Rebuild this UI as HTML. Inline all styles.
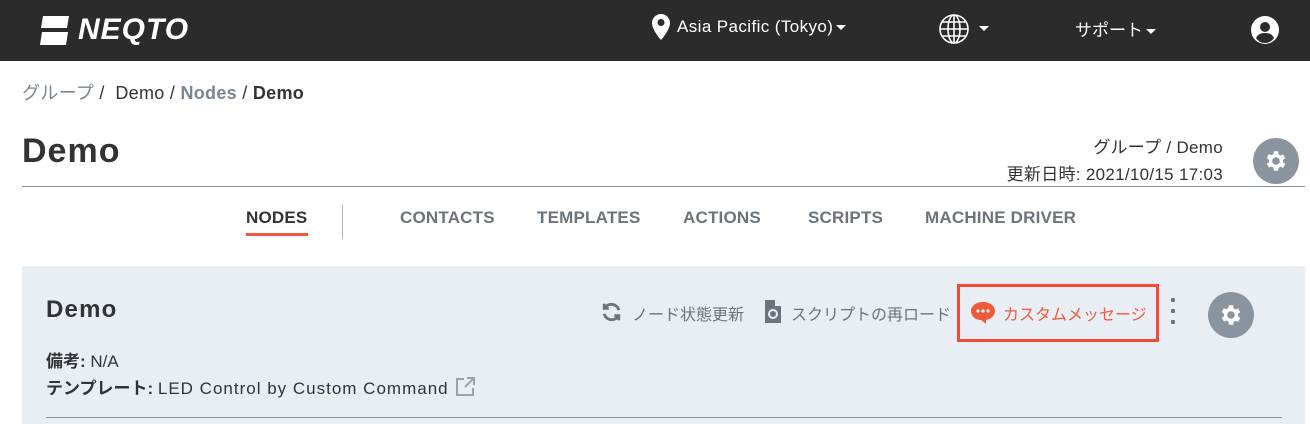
<!DOCTYPE html>
<html><head><meta charset="utf-8"><style>
*{margin:0;padding:0;box-sizing:border-box}
body{width:1310px;height:424px;overflow:hidden;background:#fff;font-family:"Liberation Sans","Noto Sans CJK JP",sans-serif;color:#333;position:relative}
.a{position:absolute;white-space:nowrap}
.hdr{position:absolute;left:0;top:0;width:1310px;height:61px;background:#2b2b2b;color:#fff}
.car{display:inline-block;width:0;height:0;border-left:5px solid transparent;border-right:5px solid transparent;border-top:5px solid #fff;vertical-align:middle;margin-left:3px}
.tab{position:absolute;top:208px;font-size:17px;font-weight:bold;color:#6b737c;letter-spacing:0.2px}
.gear{position:absolute;border-radius:50%;background:#8a949e}
</style></head><body>
<div class="hdr">
  <svg class="a" style="left:40px;top:16px" width="30" height="30" viewBox="0 0 30 30"><polygon points="3,0 29,0 27,12 1,12" fill="#fff"/><polygon points="2,16 28,16 26,29 0,29" fill="#fff"/></svg>
  <div class="a" style="left:78px;top:13px;font-size:30px;font-weight:bold;font-style:italic;letter-spacing:1px">NEQTO</div>
  <svg class="a" style="left:652px;top:14px" width="18" height="26" viewBox="0 0 18 26"><path d="M9 0C4 0 0 4 0 9c0 7 9 17 9 17s9-10 9-17c0-5-4-9-9-9zm0 12a3.5 3.5 0 1 1 0-7 3.5 3.5 0 0 1 0 7z" fill="#fff"/></svg>
  <div class="a" style="left:677px;top:17px;font-size:17px;letter-spacing:0.4px">Asia Pacific (Tokyo)<span class="car"></span></div>
  <svg class="a" style="left:938px;top:13px" width="32" height="32" viewBox="0 0 32 32" fill="none" stroke="#fff" stroke-width="1.6"><circle cx="16" cy="16" r="14"/><ellipse cx="16" cy="16" rx="6" ry="14"/><line x1="2" y1="16" x2="30" y2="16"/><line x1="4" y1="9" x2="28" y2="9"/><line x1="4" y1="23" x2="28" y2="23"/><line x1="16" y1="2" x2="16" y2="30"/></svg>
  <span class="car a" style="left:976px;top:26px"></span>
  <div class="a" style="left:1075px;top:16px;font-size:17px">サポート<span class="car"></span></div>
  <svg class="a" style="left:1251px;top:16px" width="28" height="28" viewBox="0 0 28 28"><circle cx="14" cy="14" r="14" fill="#fff"/><circle cx="14" cy="11" r="5" fill="#2b2b2b"/><path d="M5 22c2-4 5-5 9-5s7 1 9 5c-2 3-5 5-9 5s-7-2-9-5z" fill="#2b2b2b"/></svg>
</div>
<div class="a" style="left:22px;top:79px;font-size:18px;color:#333;letter-spacing:0.3px"><span style="color:#7a8593">グループ</span> /&nbsp; Demo / <b style="color:#7a8593">Nodes</b> / <b>Demo</b></div>
<div class="a" style="left:22px;top:132px;font-size:34px;font-weight:bold;color:#333;letter-spacing:1px">Demo</div>
<div class="a" style="right:87px;top:134px;font-size:17px;text-align:right;line-height:27px;letter-spacing:0.3px">グループ / Demo<br>更新日時: 2021/10/15 17:03</div>
<div class="gear" style="left:1253px;top:138px;width:46px;height:46px"></div>
<svg class="a" style="left:1263px;top:148px" width="26" height="26" viewBox="0 0 24 24"><path fill="#fff" d="M19.4 13a7.5 7.5 0 0 0 0-2l2.1-1.6-2-3.5-2.5 1a7 7 0 0 0-1.7-1L15 3h-4l-.4 2.7a7 7 0 0 0-1.7 1l-2.5-1-2 3.5L6.6 11a7.5 7.5 0 0 0 0 2l-2.1 1.6 2 3.5 2.5-1a7 7 0 0 0 1.7 1L11 21h4l.4-2.7a7 7 0 0 0 1.7-1l2.5 1 2-3.5zM13 15.5a3.5 3.5 0 1 1 0-7 3.5 3.5 0 0 1 0 7z" transform="translate(-1 0)"/></svg>
<div class="a" style="left:22px;top:186px;width:1283px;height:1px;background:#8a949e"></div>
<div class="tab" style="left:246px;color:#333">NODES</div>
<div class="a" style="left:246px;top:233px;width:62px;height:3px;background:#f05a3c"></div>
<div class="a" style="left:342px;top:205px;width:1px;height:34px;background:#aab2bb"></div>
<div class="tab" style="left:400px">CONTACTS</div>
<div class="tab" style="left:537px">TEMPLATES</div>
<div class="tab" style="left:683px">ACTIONS</div>
<div class="tab" style="left:808px">SCRIPTS</div>
<div class="tab" style="left:925px">MACHINE DRIVER</div>
<div class="a" style="left:22px;top:266px;width:1283px;height:158px;background:#e9eef5"></div>
<div class="a" style="left:46px;top:296px;font-size:24px;font-weight:bold;letter-spacing:1.2px">Demo</div>
<svg class="a" style="left:600px;top:301px" width="23" height="22" viewBox="0 0 24 24" fill="none" stroke="#6b737c" stroke-width="3.2"><path d="M20 10A8.5 8.5 0 0 0 5 7"/><path d="M4 14a8.5 8.5 0 0 0 15 3"/><path d="M4 3v5h5" stroke-width="3"/><path d="M20 21v-5h-5" stroke-width="3"/></svg>
<div class="a" style="left:632px;top:301px;font-size:16px;color:#6b737c">ノード状態更新</div>
<svg class="a" style="left:765px;top:300px" width="16" height="23" viewBox="0 0 16 23"><path d="M0 0h10l6 6v17H0z" fill="#6b737c"/><path d="M10 0v6h6" fill="#e9eef5"/><circle cx="8" cy="14" r="4" fill="none" stroke="#e9eef5" stroke-width="2"/></svg>
<div class="a" style="left:791px;top:301px;font-size:16px;color:#6b737c">スクリプトの再ロード</div>
<div class="a" style="left:957px;top:284px;width:202px;height:58px;border:3px solid #f24b36"></div>
<svg class="a" style="left:971px;top:302px" width="24" height="22" viewBox="0 0 24 22"><path d="M12 0C5 0 0 4 0 9s4 9 10 9l5 4v-4c5-1 9-4 9-9 0-5-5-9-12-9z" fill="#f05a3c"/><circle cx="7" cy="9" r="1.6" fill="#fff"/><circle cx="12" cy="9" r="1.6" fill="#fff"/><circle cx="17" cy="9" r="1.6" fill="#fff"/></svg>
<div class="a" style="left:1003px;top:301px;font-size:16px;color:#f05a3c">カスタムメッセージ</div>
<div class="a" style="left:1171px;top:298px;width:4px;height:4px;background:#6b737c;border-radius:1px"></div>
<div class="a" style="left:1171px;top:309px;width:4px;height:4px;background:#6b737c;border-radius:1px"></div>
<div class="a" style="left:1171px;top:320px;width:4px;height:4px;background:#6b737c;border-radius:1px"></div>
<div class="gear" style="left:1208px;top:292px;width:46px;height:46px"></div>
<svg class="a" style="left:1218px;top:302px" width="26" height="26" viewBox="0 0 24 24"><path fill="#fff" d="M19.4 13a7.5 7.5 0 0 0 0-2l2.1-1.6-2-3.5-2.5 1a7 7 0 0 0-1.7-1L15 3h-4l-.4 2.7a7 7 0 0 0-1.7 1l-2.5-1-2 3.5L6.6 11a7.5 7.5 0 0 0 0 2l-2.1 1.6 2 3.5 2.5-1a7 7 0 0 0 1.7 1L11 21h4l.4-2.7a7 7 0 0 0 1.7-1l2.5 1 2-3.5zM13 15.5a3.5 3.5 0 1 1 0-7 3.5 3.5 0 0 1 0 7z" transform="translate(-1 0)"/></svg>
<div class="a" style="left:46px;top:347px;font-size:17px"><b>備考:</b> N/A</div>
<div class="a" style="left:46px;top:374px;font-size:17px"><b>テンプレート:</b> <span style="letter-spacing:1px">LED Control by Custom Command</span></div>
<svg class="a" style="left:455px;top:377px" width="20" height="20" viewBox="0 0 20 20" fill="none" stroke="#9aa3ad" stroke-width="2"><path d="M9 2H2v16h16v-7"/><path d="M12 1h7v7M19 1l-9 9"/></svg>
<div class="a" style="left:46px;top:417px;width:1236px;height:1px;background:#8a949e"></div>
</body></html>
